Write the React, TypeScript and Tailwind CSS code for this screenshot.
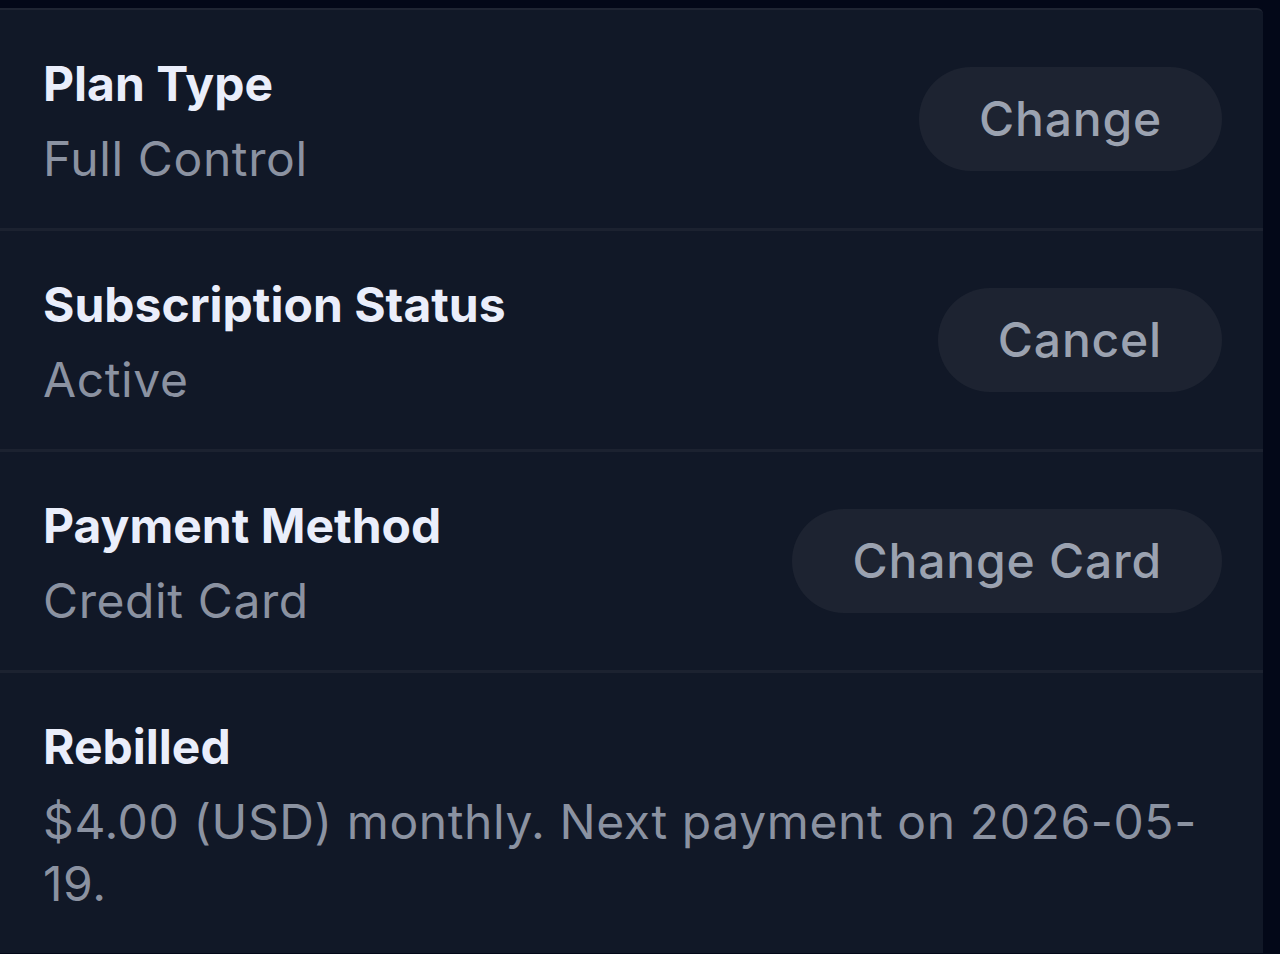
const rows = [
  { label: 'Plan Type', value: 'Full Control', action: 'Change' },
  { label: 'Subscription Status', value: 'Active', action: 'Cancel' },
  { label: 'Payment Method', value: 'Credit Card', action: 'Change Card' },
  {
    label: 'Rebilled',
    value: '$4.00 (USD) monthly. Next payment on 2026-05-19.',
  },
]

interface IRowProps {
  label: string
  value: string
  action?: string
  last?: boolean
}

function SettingRow({ label, value, action, last }: IRowProps) {
  return (
    <div
      className={`flex items-center justify-between gap-6 pl-[43px] pr-[41px] py-[38px] ${
        last ? '' : 'border-b-[3px] border-[#1c2230]'
      }`}
    >
      <div className="min-w-0">
        <h3 className="text-[48px] leading-[72px] font-bold text-[#eaeefb]">
          {label}
        </h3>
        <p className="mt-2 text-[48px] leading-[62px] tracking-[0.6px] text-[#8b92a1]">
          {value}
        </p>
      </div>

      {action && (
        <button className="shrink-0 h-[104px] px-[60px] rounded-full bg-[#1d2331] text-[48px] font-medium tracking-[0.8px] text-[#9ba2b0]">
          {action}
        </button>
      )}
    </div>
  )
}

export default function App() {
  return (
    <div
      className="min-h-[954px] bg-[#030818] pt-2"
      style={{ fontFamily: 'Inter, "Noto Sans", sans-serif' }}
    >
      <div className="w-[1263px] rounded-tr-[6px] border-t-[2px] border-[#1f2533] bg-[#111827]">
        {rows.map((row, i) => (
          <SettingRow key={row.label} {...row} last={i === rows.length - 1} />
        ))}
      </div>
    </div>
  )
}
